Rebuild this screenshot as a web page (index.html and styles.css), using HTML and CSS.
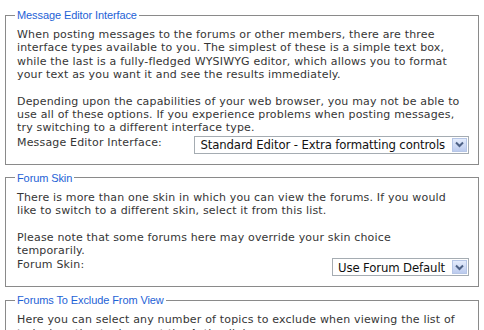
FILE: index.html
```html
<!DOCTYPE html>
<html lang="en">
<head>
  <meta charset="UTF-8">
  <title>Profile Options</title>
  <link rel="stylesheet" href="styles.css">
</head>
<body>
  <fieldset class="option-box">
    <legend>Message Editor Interface</legend>
    <p>When posting messages to the forums or other members, there are three interface types available to you. The simplest of these is a simple text box, while the last is a fully-fledged WYSIWYG editor, which allows you to format your text as you want it and see the results immediately.</p>
    <p>Depending upon the capabilities of your web browser, you may not be able to use all of these options. If you experience problems when posting messages, try switching to a different interface type.</p>
    <div class="option-row">
      <label>Message Editor Interface:</label>
      <div class="fake-select">
        <span class="value">Standard Editor - Extra formatting controls</span>
        <span class="arrow">
          <svg width="9" height="7" viewBox="0 0 9 7"><path d="M1 1.5 L4.5 5 L8 1.5" fill="none" stroke="#4d6185" stroke-width="2"/></svg>
        </span>
      </div>
    </div>
  </fieldset>

  <fieldset class="option-box">
    <legend>Forum Skin</legend>
    <p>There is more than one skin in which you can view the forums. If you would like to switch to a different skin, select it from this list.</p>
    <p>Please note that some forums here may override your skin choice temporarily.</p>
    <div class="option-row">
      <label>Forum Skin:</label>
      <div class="fake-select">
        <span class="value">Use Forum Default</span>
        <span class="arrow">
          <svg width="9" height="7" viewBox="0 0 9 7"><path d="M1 1.5 L4.5 5 L8 1.5" fill="none" stroke="#4d6185" stroke-width="2"/></svg>
        </span>
      </div>
    </div>
  </fieldset>

  <fieldset class="option-box">
    <legend>Forums To Exclude From View</legend>
    <p>Here you can select any number of topics to exclude when viewing the list of today's active topics or at the Active link.</p>
  </fieldset>
</body>
</html>
```

FILE: styles.css
```css
* {
  box-sizing: border-box;
}

body {
  margin: 0;
  padding: 8px 5px 0 5px;
  background: #fff;
  font-family: "DejaVu Sans", Verdana, sans-serif;
  font-size: 11px;
  line-height: 13.4px;
  letter-spacing: 0.17px;
  color: #363636;
}

.option-box {
  margin: 0 0 6px 0;
  padding: 6px 18px 10px 11px;
  border: 1px solid #8a8a8a;
}

.option-box legend {
  padding: 0 2px;
  margin-left: -2px;
  font-family: "Liberation Sans", Arial, sans-serif;
  font-size: 11px;
  line-height: 14px;
  letter-spacing: -0.1px;
  color: #1e62d6;
}

.option-box p {
  margin: 0 0 13px 0;
}

.option-row {
  display: flex;
  justify-content: space-between;
  align-items: flex-start;
  margin: -12px -9px 0 0;
}

.fake-select {
  display: flex;
  align-items: center;
  height: 18px;
  border: 1px solid #a5acb2;
  padding: 0 1px 0 5px;
  background: #fff;
  color: #111;
  font-family: "DejaVu Sans Condensed", "DejaVu Sans", sans-serif;
  font-size: 13px;
  line-height: 15px;
  letter-spacing: -0.12px;
}

.fake-select .value {
  padding-right: 7px;
}

.fake-select .arrow {
  display: flex;
  align-items: center;
  justify-content: center;
  width: 15px;
  height: 14px;
  border: 1px solid #b6c6e6;
  background: linear-gradient(#e4ecfc, #bccbee);
}
```
